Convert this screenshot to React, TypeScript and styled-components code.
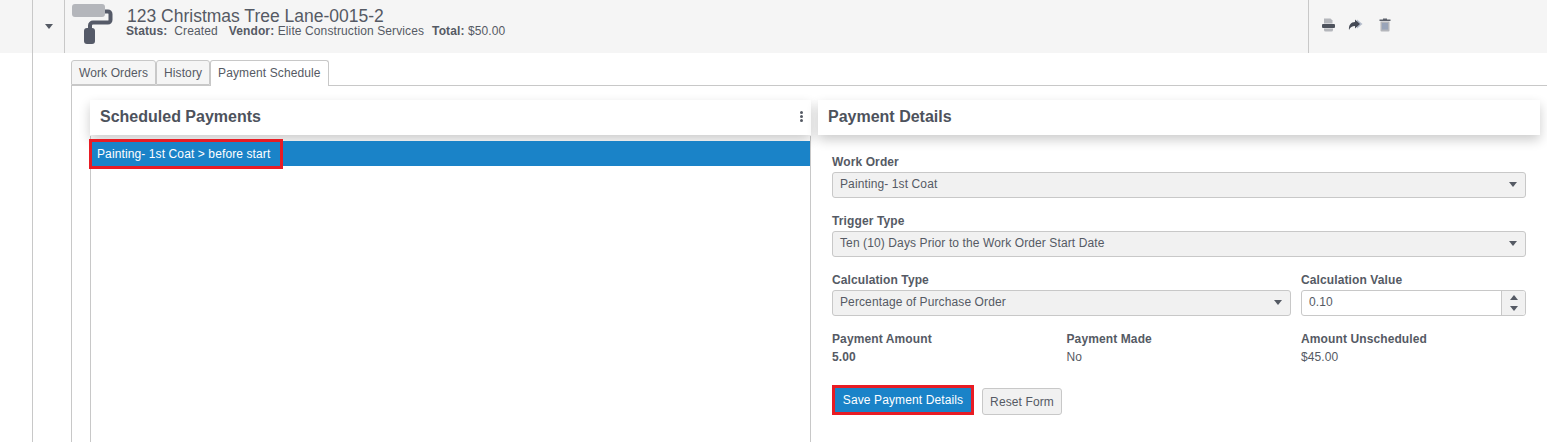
import React from "react";
import styled, { createGlobalStyle } from "styled-components";

const Global = createGlobalStyle`
  html, body { margin: 0; padding: 0; background: #fff; }
  body { font-family: "Liberation Sans", Arial, sans-serif; font-size: 12px; color: #555a64; letter-spacing: 0.11px; }
  * { box-sizing: border-box; }
`;

const Page = styled.div`
  width: 1547px;
  height: 442px;
  overflow: hidden;
  display: flex;
  flex-direction: column;
`;

const HeaderBar = styled.header`
  height: 53px;
  flex: none;
  background: #f5f5f5;
  display: grid;
  grid-template-columns: 33px 32px 1244px 1fr;
`;

const Gutter = styled.div`
  border-right: 1px solid #c8c8c8;
`;

const CaretCell = styled.div`
  border-right: 1px solid #c8c8c8;
  display: flex;
  align-items: center;
  justify-content: center;
`;

const Caret = styled.span<{ $size?: number; $color?: string; $up?: boolean }>`
  display: block;
  width: 0;
  height: 0;
  border-left: ${(p) => p.$size ?? 4}px solid transparent;
  border-right: ${(p) => p.$size ?? 4}px solid transparent;
  ${(p) => (p.$up ? "border-bottom" : "border-top")}: ${(p) => (p.$size ?? 4) + 1}px solid ${(p) => p.$color ?? "#555a64"};
`;

const TitleCell = styled.div`
  border-right: 1px solid #c8c8c8;
  display: flex;
  padding-left: 7px;
  gap: 12px;
`;

const TitleBlock = styled.div`
  padding-top: 7px;
`;

const Title = styled.div`
  font-size: 17.5px;
  line-height: 18px;
  letter-spacing: 0;
  padding-left: 1px;
  color: #555a64;
`;

const Meta = styled.div`
  font-size: 12px;
  line-height: 13px;
  display: flex;
  color: #555a64;
  b { font-weight: 700; }
`;

const MetaItem = styled.span<{ $gap: number }>`
  margin-right: ${(p) => p.$gap}px;
  white-space: pre;
`;

const Actions = styled.div`
  display: flex;
  padding: 18px 0 0 13px;
  gap: 13px;
`;

const Body = styled.div`
  flex: 1;
  margin-left: 32px;
  border-left: 1px solid #c8c8c8;
  padding: 7px 0 0 38px;
  min-height: 0;
  display: flex;
  flex-direction: column;
`;

const Tabs = styled.nav`
  display: flex;
  height: 26px;
  flex: none;
  border-bottom: 1px solid #c8c8c8;
`;

const Tab = styled.div<{ $active?: boolean }>`
  height: ${(p) => (p.$active ? 26 : 25)}px;
  padding: 0 7px;
  line-height: 24px;
  font-size: 12px;
  color: #555a64;
  border: 1px solid #c8c8c8;
  border-bottom: ${(p) => (p.$active ? "none" : "1px solid #c8c8c8")};
  border-radius: 3px 3px 0 0;
  background: ${(p) => (p.$active ? "#fff" : "#f5f5f5")};
`;

const TabBody = styled.div`
  flex: 1;
  border-left: 1px solid #c8c8c8;
  padding: 14px 7px 0 18px;
  display: grid;
  grid-template-columns: 721px 722px;
  gap: 7px;
  min-height: 0;
`;

const Column = styled.section`
  display: flex;
  flex-direction: column;
  min-height: 0;
`;

const PanelHead = styled.div`
  height: 35px;
  flex: none;
  background: #fff;
  display: flex;
  align-items: center;
  justify-content: space-between;
  padding: 0 8px 2px 10px;
  box-shadow: 0 5px 12px rgba(0, 0, 0, 0.2);
  position: relative;
  font-size: 16px;
  font-weight: 700;
  letter-spacing: 0;
  color: #4d525c;
`;

const Kebab = styled.span`
  display: flex;
  flex-direction: column;
  gap: 1px;
  i { display: block; width: 3px; height: 3px; border-radius: 50%; background: #555a64; }
`;

const List = styled.div`
  flex: 1;
  margin-top: 1px;
  border: 1px solid #c8c8c8;
  border-width: 0 1px;
  padding-top: 5px;
`;

const ListItem = styled.div`
  position: relative;
  height: 25px;
  line-height: 26px;
  padding-left: 6px;
  background: #1a83c8;
  color: #fff;
  font-size: 12px;
`;

const Highlight = styled.span`
  position: absolute;
  left: -2px;
  top: -2px;
  width: 194px;
  height: 30px;
  border: 3px solid #e81c24;
`;

const Form = styled.div`
  padding: 20px 14px 0 14px;
  display: flex;
  flex-direction: column;
`;

const Row = styled.div<{ $mt?: number }>`
  display: grid;
  grid-template-columns: 459px 225px;
  column-gap: 10px;
  margin-top: ${(p) => p.$mt ?? 0}px;
`;

const Field = styled.div<{ $mt?: number }>`
  margin-top: ${(p) => p.$mt ?? 0}px;
`;

const Label = styled.div`
  font-size: 12px;
  font-weight: 700;
  line-height: 14px;
  color: #555a64;
  margin-bottom: 3px;
`;

const SelectBox = styled.div`
  height: 26px;
  background: #f1f1f1;
  border: 1px solid #c8c8c8;
  border-radius: 3px;
  display: flex;
  align-items: center;
  justify-content: space-between;
  padding: 0 8px 2px 7px;
  font-size: 12px;
  color: #555a64;
`;

const NumberBox = styled.div`
  height: 26px;
  background: #fff;
  border: 1px solid #c8c8c8;
  border-radius: 3px;
  display: flex;
  align-items: center;
  justify-content: space-between;
  padding-left: 7px;
  font-size: 12px;
  color: #555a64;
`;

const NumberText = styled.span`
  margin-bottom: 2px;
`;

const Spinner = styled.div`
  width: 24px;
  height: 100%;
  border-left: 1px solid #c8c8c8;
  background: #f1f1f1;
  border-radius: 0 3px 3px 0;
  display: flex;
  flex-direction: column;
  align-items: center;
  justify-content: center;
  gap: 6px;
`;

const Stats = styled.div`
  display: grid;
  grid-template-columns: 234.5px 234.5px 225px;
  margin-top: 16px;
  line-height: 14px;
`;

const Value = styled.div<{ $bold?: boolean }>`
  margin-top: 4px;
  font-weight: ${(p) => (p.$bold ? 700 : 400)};
  font-size: 12px;
  line-height: 14px;
  color: #555a64;
`;

const Buttons = styled.div`
  display: flex;
  align-items: flex-end;
  gap: 8px;
  margin-top: 21px;
`;

const SaveButton = styled.div`
  width: 142px;
  height: 30px;
  background: #1a83c8;
  border: 3px solid #e81c24;
  color: #fff;
  font-size: 12px;
  display: flex;
  align-items: center;
  justify-content: center;
`;

const ResetButton = styled.div`
  width: 80px;
  height: 27px;
  background: #f1f1f1;
  border: 1px solid #c8c8c8;
  border-radius: 3px;
  color: #555a64;
  font-size: 12px;
  display: flex;
  align-items: center;
  justify-content: center;
`;

const Roller = () => (
  <svg width="42" height="41" viewBox="0 0 42 41" style={{ marginTop: 4, flex: "none" }}>
    <rect x="0" y="0" width="33" height="13" rx="3" fill="#b4b6bb" />
    <path d="M33 7.500h3a2.500 2.500 0 0 1 2.500 2.500v6a2.500 2.500 0 0 1-2.500 2.500H21a3 3 0 0 0-3 3v5" fill="none" stroke="#555a68" strokeWidth="4" />
    <rect x="12" y="24" width="11" height="16" rx="3" fill="#555a68" />
  </svg>
);

const PrintIcon = () => (
  <svg width="13" height="14" viewBox="0 0 13 14">
    <path d="M2 0.500h6.500l2 2V5.500H2z" fill="#b4b6bb" />
    <rect x="0" y="6" width="13" height="4" rx="1" fill="#4d525c" />
    <path d="M2 10.500h9V12a1.500 1.500 0 0 1-1.500 1.500h-6A1.500 1.500 0 0 1 2 12z" fill="#b4b6bb" />
  </svg>
);

const ShareIcon = () => (
  <svg width="15" height="14" viewBox="0 0 15 14">
    <path d="M9 1.500L14.500 6 9 10.500z" fill="#b4bccb" />
    <path d="M7 1.500L12 6l-5 4.500V8C4 8 2.500 9 1 12 .5 7 3 4 7 4z" fill="#454a55" />
  </svg>
);

const TrashIcon = () => (
  <svg width="12" height="14" viewBox="0 0 12 14" style={{ marginLeft: 3 }}>
    <rect x="0.500" y="1.500" width="11" height="1.500" fill="#5b606b" />
    <rect x="4" y="0.500" width="4" height="1.500" fill="#5b606b" />
    <path d="M1.500 3.500h9V12.500a1 1 0 0 1-1 1h-7a1 1 0 0 1-1-1z" fill="#b4b6bb" />
    <path d="M4 5v6.500M6 5v6.500M8 5v6.500" stroke="#7e93b8" strokeWidth="1" />
  </svg>
);

export default function App() {
  return (
    <Page>
      <Global />
      <HeaderBar>
        <Gutter />
        <CaretCell>
          <Caret />
        </CaretCell>
        <TitleCell>
          <Roller />
          <TitleBlock>
            <Title>123 Christmas Tree Lane-0015-2</Title>
            <Meta>
              <MetaItem $gap={11}><b>Status:</b>  Created</MetaItem>
              <MetaItem $gap={8}><b>Vendor:</b> Elite Construction Services</MetaItem>
              <MetaItem $gap={0}><b>Total:</b> $50.00</MetaItem>
            </Meta>
          </TitleBlock>
        </TitleCell>
        <Actions>
          <PrintIcon />
          <ShareIcon />
          <TrashIcon />
        </Actions>
      </HeaderBar>
      <Body>
        <Tabs>
          <Tab>Work Orders</Tab>
          <Tab>History</Tab>
          <Tab $active>Payment Schedule</Tab>
        </Tabs>
        <TabBody>
          <Column>
            <PanelHead>
              Scheduled Payments
              <Kebab><i /><i /><i /></Kebab>
            </PanelHead>
            <List>
              <ListItem>
                Painting- 1st Coat &gt; before start
                <Highlight />
              </ListItem>
            </List>
          </Column>
          <Column>
            <PanelHead>Payment Details</PanelHead>
            <Form>
              <Field>
                <Label>Work Order</Label>
                <SelectBox>Painting- 1st Coat<Caret /></SelectBox>
              </Field>
              <Field $mt={16}>
                <Label>Trigger Type</Label>
                <SelectBox>Ten (10) Days Prior to the Work Order Start Date<Caret /></SelectBox>
              </Field>
              <Row $mt={16}>
                <Field>
                  <Label>Calculation Type</Label>
                  <SelectBox>Percentage of Purchase Order<Caret /></SelectBox>
                </Field>
                <Field>
                  <Label>Calculation Value</Label>
                  <NumberBox>
                    <NumberText>0.10</NumberText>
                    <Spinner>
                      <Caret $up />
                      <Caret />
                    </Spinner>
                  </NumberBox>
                </Field>
              </Row>
              <Stats>
                <div>
                  <Label>Payment Amount</Label>
                  <Value $bold>5.00</Value>
                </div>
                <div>
                  <Label>Payment Made</Label>
                  <Value>No</Value>
                </div>
                <div>
                  <Label>Amount Unscheduled</Label>
                  <Value>$45.00</Value>
                </div>
              </Stats>
              <Buttons>
                <SaveButton>Save Payment Details</SaveButton>
                <ResetButton>Reset Form</ResetButton>
              </Buttons>
            </Form>
          </Column>
        </TabBody>
      </Body>
    </Page>
  );
}
